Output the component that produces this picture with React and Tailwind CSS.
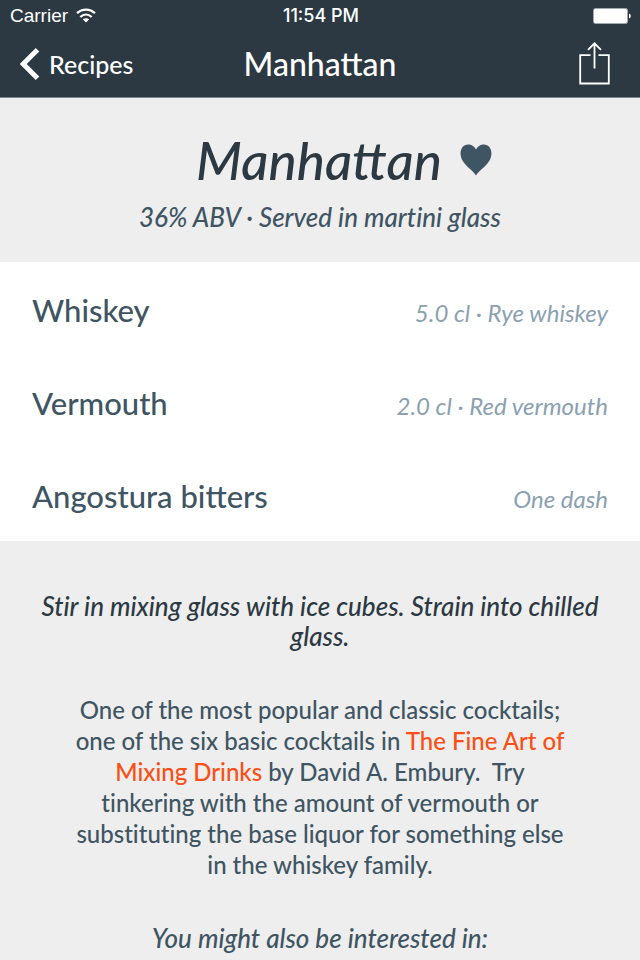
const ingredients = [
  { name: "Whiskey", detail: "5.0 cl · Rye whiskey" },
  { name: "Vermouth", detail: "2.0 cl · Red vermouth" },
  { name: "Angostura bitters", detail: "One dash" },
];

function WifiIcon() {
  return (
    <svg className="h-4 w-5" viewBox="0 0 20 16" fill="none" stroke="#fff" strokeWidth="2.3" aria-hidden="true">
      <path d="M1 5.2C6.2 0.3 13.8 0.3 19 5.2" />
      <path d="M4.3 9C7.7 5.9 12.3 5.9 15.7 9" />
      <path d="M10 14.5L6.8 11.3C8.6 9.8 11.4 9.8 13.2 11.3Z" fill="#fff" stroke="none" />
    </svg>
  );
}

function BatteryIcon() {
  return (
    <svg className="h-4 w-[39px]" viewBox="0 0 39 16" aria-hidden="true">
      <rect x="0.5" y="0.5" width="34" height="15" rx="2" fill="#fff" stroke="#a3aaae" />
      <path d="M36 5.5C38.4 6.2 38.4 9.8 36 10.5Z" fill="#fff" />
    </svg>
  );
}

function StatusBar() {
  return (
    <div className="grid h-8 grid-cols-3 items-center pl-[10px] pr-[8px] font-['Liberation_Sans',sans-serif] text-[19px] leading-8">
      <div className="flex items-center gap-2">
        <span>Carrier</span>
        <WifiIcon />
      </div>
      <span className="text-center font-['Inter',sans-serif] text-[18px] font-medium">11:54 PM</span>
      <div className="flex justify-end">
        <BatteryIcon />
      </div>
    </div>
  );
}

function NavBar() {
  return (
    <nav className="grid h-[65px] grid-cols-3 items-center px-5 pb-[2px]">
      <button type="button" className="flex items-center gap-[9px] text-[25px] font-medium leading-8">
        <svg className="h-8 w-5" viewBox="0 0 20 32" fill="none" stroke="#fff" strokeWidth="5" aria-hidden="true">
          <path d="M17.5 1.8L3.2 16L17.5 30.2" />
        </svg>
        Recipes
      </button>
      <span className="text-center text-[32px] font-medium leading-8">Manhattan</span>
      <button type="button" aria-label="Share" className="justify-self-end pr-[10px]">
        <svg className="h-[44px] w-[31px]" viewBox="0 0 31 44" fill="none" stroke="#fff" strokeWidth="1.8" aria-hidden="true">
          <path d="M11.5 13.2H1.2V41.5H29.8V13.2H19.5" />
          <path d="M15.5 26.5V1.5M9 7.8L15.5 1.3L22 7.8" />
        </svg>
      </button>
    </nav>
  );
}

export default function App() {
  return (
    <div className="min-h-screen bg-[#eeeeee] font-['Lato',sans-serif] text-[#3f5563]">
      <header className="border-b border-[#7d858c] bg-[#2c3943] text-white">
        <StatusBar />
        <NavBar />
      </header>
      <main>
        <section className="flex flex-col items-center gap-3 pt-8 pb-[30px]">
          <div className="flex items-center gap-[18px] pl-12">
            <h1 className="text-[53px] font-medium italic leading-[60px] text-[#2c3943]">Manhattan</h1>
            <svg className="h-8 w-8" viewBox="0 0 32 32" fill="#3f5563" role="img" aria-label="Favourite">
              <path d="M16 31.5C13.8 27.5 6 22.5 2.8 17C-1.8 9.5 1 0.5 8.2 0.5C12 0.5 14.5 2.5 16 5.5C17.5 2.5 20 0.5 23.8 0.5C31 0.5 33.8 9.5 29.2 17C26 22.5 18.2 27.5 16 31.5Z" />
            </svg>
          </div>
          <p className="text-[26px] font-medium italic leading-[30px] [font-variant-ligatures:none]">
            36% ABV · Served in martini glass
          </p>
        </section>
        <ul className="bg-white">
          {ingredients.map((item) => (
            <li key={item.name} className="flex h-[93px] items-baseline justify-between px-8 pt-7">
              <span className="text-[31px] font-medium leading-10">{item.name}</span>
              <span className="text-[24px] italic leading-10 text-[#8ba1b0]">{item.detail}</span>
            </li>
          ))}
        </ul>
        <section className="flex flex-col items-center pt-[50px] text-center [font-variant-ligatures:none]">
          <p className="px-10 text-[26px] font-medium italic leading-[30px] text-[#2c3943]">
            Stir in mixing glass with ice cubes. Strain into chilled glass.
          </p>
          <p className="mt-[43px] px-[70px] text-[24px] font-medium leading-[31px]">
            One of the most popular and classic cocktails; one of the six basic cocktails in{" "}
            <a href="#book" className="text-[#fb4f14]">The Fine Art of Mixing Drinks</a> by David A. Embury.&nbsp; Try
            tinkering with the amount of vermouth or substituting the base liquor for something else in the whiskey
            family.
          </p>
          <h2 className="mt-[43px] text-[26px] font-medium italic leading-[31px]">You might also be interested in:</h2>
        </section>
      </main>
    </div>
  );
}
